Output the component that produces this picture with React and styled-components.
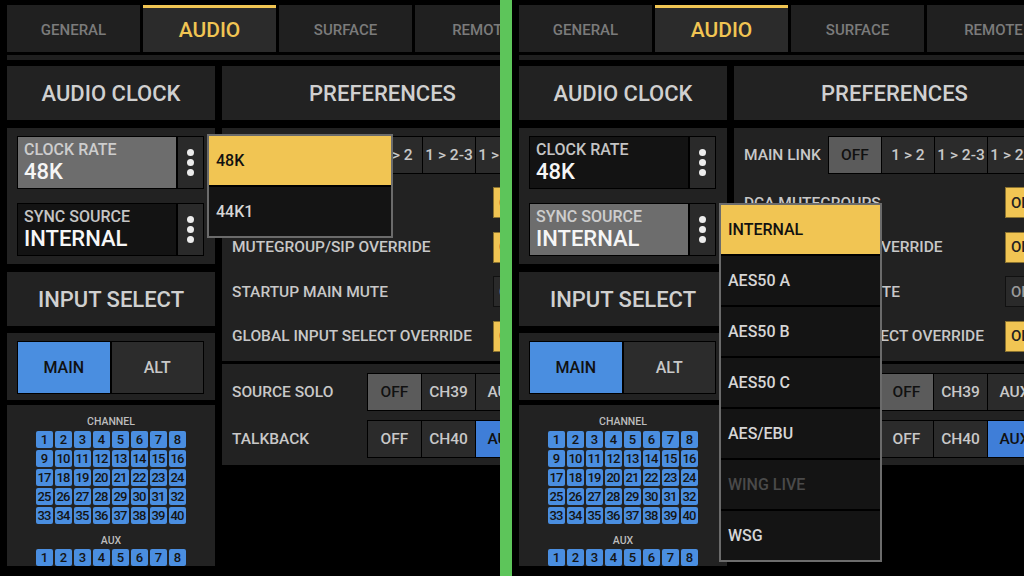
import React from 'react';
import styled, { createGlobalStyle } from 'styled-components';

const GlobalStyle = createGlobalStyle`
  body {
    margin: 0;
    background: #000;
  }
  * {
    box-sizing: border-box;
  }
`;

const YELLOW = '#f1c553';
const BLUE = '#4a8ee0';

const Page = styled.div`
  display: flex;
  width: 1024px;
  height: 576px;
  background: #000;
  overflow: hidden;
`;

const Pane = styled.div`
  width: ${p => p.$width}px;
  height: 576px;
  overflow: hidden;
  flex-shrink: 0;
`;

const Divider = styled.div`
  width: 12px;
  height: 576px;
  background: #5dc55a;
  flex-shrink: 0;
`;

const Screen = styled.div`
  position: relative;
  width: 560px;
  height: 576px;
  padding: 5px 0 0 7px;
  background: #000;
  font-family: Roboto, "Liberation Sans", sans-serif;
  font-weight: 500;
`;

const TabBar = styled.div`
  display: flex;
  gap: 3px;
`;

const Tab = styled.div`
  width: 133px;
  height: 47px;
  flex-shrink: 0;
  display: flex;
  align-items: center;
  justify-content: center;
  border-top: 3px solid ${p => (p.$active ? YELLOW : '#202020')};
  background: ${p => (p.$active ? '#2b2b2b' : '#202020')};
  color: ${p => (p.$active ? YELLOW : '#7b7b7b')};
  font-size: ${p => (p.$active ? '21px' : '15px')};
`;

const Strip = styled.div`
  height: 5px;
  margin-top: 3px;
  background: #1f1f1f;
`;

const Body = styled.div`
  display: grid;
  grid-template-columns: 208px 321px;
  column-gap: 7px;
  margin-top: 6px;
`;

const Column = styled.div`
  display: flex;
  flex-direction: column;
`;

const Header = styled.div`
  height: 54px;
  display: flex;
  align-items: center;
  justify-content: center;
  background: #222;
  color: #d0d0d0;
  font-size: 22px;
  margin-top: ${p => p.$gap || 0}px;
`;

const Panel = styled.div`
  background: #222;
  margin-top: ${p => p.$gap || 0}px;
  padding: ${p => p.$pad || '0'};
`;

const Field = styled.div`
  display: flex;
  gap: 2px;
  height: 53px;
  border: 1px solid #000;
  background: #000;
  margin-top: ${p => p.$gap || 0}px;
`;

const FieldBody = styled.div`
  flex: 1;
  display: flex;
  flex-direction: column;
  padding: 4px 6px 0;
  background: ${p => (p.$active ? '#6d6d6d' : '#131313')};
`;

const FieldLabel = styled.div`
  font-size: 16px;
  line-height: 18px;
  color: ${p => (p.$active ? '#cdcdcd' : '#c4c4c4')};
`;

const FieldValue = styled.div`
  font-size: 22px;
  line-height: 25px;
  color: #f6f6f6;
`;

const DotsButton = styled.div`
  width: 25px;
  display: flex;
  flex-direction: column;
  align-items: center;
  justify-content: center;
  gap: 3px;
  background: #2a2a2a;
`;

const Dot = styled.span`
  width: 7px;
  height: 7px;
  border-radius: 50%;
  background: #ececec;
`;

const Switch = styled.div`
  display: flex;
  gap: 2px;
  height: 53px;
  border: 1px solid #000;
  background: #000;
`;

const SwitchOption = styled.div`
  flex: 1;
  display: flex;
  align-items: center;
  justify-content: center;
  font-size: 16px;
  background: ${p => (p.$active ? BLUE : '#2c2c2c')};
  color: ${p => (p.$active ? '#111' : '#c8c8c8')};
`;

const ChannelPanel = styled.div`
  flex: 1;
  height: 200px;
  margin-top: 5px;
  padding-top: 11px;
  display: flex;
  flex-direction: column;
  align-items: center;
  background: #222;
`;

const GroupLabel = styled.div`
  font-size: 10.5px;
  line-height: 12px;
  color: #bdbdbd;
  margin-top: ${p => p.$gap || 0}px;
  margin-bottom: ${p => p.$below || 3}px;
`;

const ChipGrid = styled.div`
  display: grid;
  grid-template-columns: repeat(8, 17px);
  grid-auto-rows: 17px;
  column-gap: 2px;
  row-gap: 2px;
`;

const Chip = styled.div`
  display: flex;
  align-items: center;
  justify-content: center;
  border-radius: 2px;
  background: ${BLUE};
  color: #141414;
  font-size: 13px;
  letter-spacing: -0.9px;
  text-indent: -0.9px;
`;

const PrefRow = styled.div`
  display: flex;
  align-items: center;
  height: ${p => p.$h || 31}px;
  margin-top: ${p => p.$gap || 0}px;
`;

const RowLabel = styled.div`
  width: ${p => p.$w || 261}px;
  flex-shrink: 0;
  color: #c8c8c8;
  font-size: 15.5px;
  white-space: nowrap;
`;

const ButtonGroup = styled.div`
  display: flex;
  gap: 1px;
  height: 38px;
  padding: 1px;
  margin-left: -1px;
  background: #000;
`;

const GroupButton = styled.div`
  width: ${p => p.$w || 52}px;
  flex-shrink: 0;
  display: flex;
  align-items: center;
  justify-content: center;
  font-size: 15.5px;
  white-space: nowrap;
  background: ${p => (p.$tone === 'grey' ? '#5b5b5b' : p.$tone === 'blue' ? '#3f7ed8' : '#2b2b2b')};
  color: ${p => (p.$tone ? '#111' : '#c8c8c8')};
`;

const Toggle = styled.div`
  width: 42px;
  height: 31px;
  display: flex;
  align-items: center;
  padding-left: 5px;
  border: 1px solid ${p => (p.$on ? '#8a7230' : '#111')};
  background: ${p => (p.$on ? YELLOW : '#2a2a2a')};
  color: ${p => (p.$on ? '#222' : '#9a9a9a')};
  font-size: 15px;
`;

const Menu = styled.div`
  position: absolute;
  top: ${p => p.$top}px;
  left: ${p => p.$left}px;
  width: ${p => p.$width}px;
  display: flex;
  flex-direction: column;
  gap: 2px;
  border: 2px solid #6b6b6b;
  background: #000;
`;

const MenuItem = styled.div`
  height: 49px;
  display: flex;
  align-items: center;
  padding-left: 7px;
  font-size: 16px;
  background: ${p => (p.$selected ? YELLOW : '#141414')};
  color: ${p => (p.$selected ? '#111' : p.$disabled ? '#4a4a4a' : '#d6d6d6')};
`;

const tabs = ['GENERAL', 'AUDIO', 'SURFACE', 'REMOTE'];
const channels = Array.from({ length: 40 }, (_, i) => i + 1);
const auxes = Array.from({ length: 8 }, (_, i) => i + 1);

const menus = {
  clock: {
    top: 134,
    width: 186,
    items: [{ label: '48K', selected: true }, { label: '44K1' }],
  },
  sync: {
    top: 203,
    width: 163,
    items: [
      { label: 'INTERNAL', selected: true },
      { label: 'AES50 A' },
      { label: 'AES50 B' },
      { label: 'AES50 C' },
      { label: 'AES/EBU' },
      { label: 'WING LIVE', disabled: true },
      { label: 'WSG' },
    ],
  },
};

const toggles = [
  { label: 'DCA MUTEGROUPS', on: true },
  { label: 'MUTEGROUP/SIP OVERRIDE', on: true },
  { label: 'STARTUP MAIN MUTE', on: false },
  { label: 'GLOBAL INPUT SELECT OVERRIDE', on: true },
];

function ClockField({ label, value, active, gap }) {
  return (
    <Field $gap={gap}>
      <FieldBody $active={active}>
        <FieldLabel $active={active}>{label}</FieldLabel>
        <FieldValue>{value}</FieldValue>
      </FieldBody>
      <DotsButton>
        <Dot />
        <Dot />
        <Dot />
      </DotsButton>
    </Field>
  );
}

function AudioScreen({ open }) {
  const menu = menus[open];
  return (
    <Screen>
      <TabBar>
        {tabs.map(t => (
          <Tab key={t} $active={t === 'AUDIO'}>{t}</Tab>
        ))}
      </TabBar>
      <Strip />
      <Body>
        <Column>
          <Header>AUDIO CLOCK</Header>
          <Panel $gap={8} $pad="8px 11px 8px 10px">
            <ClockField label="CLOCK RATE" value="48K" active={open === 'clock'} />
            <ClockField label="SYNC SOURCE" value="INTERNAL" active={open === 'sync'} gap={14} />
          </Panel>
          <Header $gap={8}>INPUT SELECT</Header>
          <Panel $gap={7} $pad="8px 11px 6px 10px">
            <Switch>
              <SwitchOption $active>MAIN</SwitchOption>
              <SwitchOption>ALT</SwitchOption>
            </Switch>
          </Panel>
          <ChannelPanel>
            <GroupLabel>CHANNEL</GroupLabel>
            <ChipGrid>
              {channels.map(n => <Chip key={n}>{n}</Chip>)}
            </ChipGrid>
            <GroupLabel $gap={11} $below={2}>AUX</GroupLabel>
            <ChipGrid>
              {auxes.map(n => <Chip key={n}>{n}</Chip>)}
            </ChipGrid>
          </ChannelPanel>
        </Column>
        <Column>
          <Header>PREFERENCES</Header>
          <Panel $gap={8} $pad="8px 10px 9px 10px">
            <PrefRow $h={38}>
              <RowLabel $w={85}>MAIN LINK</RowLabel>
              <ButtonGroup>
                <GroupButton $tone="grey">OFF</GroupButton>
                <GroupButton>1 &gt; 2</GroupButton>
                <GroupButton>1 &gt; 2-3</GroupButton>
                <GroupButton>1 &gt; 2-4</GroupButton>
              </ButtonGroup>
            </PrefRow>
            {toggles.map((t, i) => (
              <PrefRow key={t.label} $gap={i === 0 ? 13 : 13.5}>
                <RowLabel>{t.label}</RowLabel>
                <Toggle $on={t.on}>{t.on ? 'ON' : 'OFF'}</Toggle>
              </PrefRow>
            ))}
          </Panel>
          <Panel $gap={3} $pad="9px 10px 7px 10px">
            <PrefRow $h={38}>
              <RowLabel $w={136}>SOURCE SOLO</RowLabel>
              <ButtonGroup>
                <GroupButton $tone="grey" $w={53}>OFF</GroupButton>
                <GroupButton $w={53}>CH39</GroupButton>
                <GroupButton $w={53}>AUX</GroupButton>
              </ButtonGroup>
            </PrefRow>
            <PrefRow $h={38} $gap={9}>
              <RowLabel $w={136}>TALKBACK</RowLabel>
              <ButtonGroup>
                <GroupButton $w={53}>OFF</GroupButton>
                <GroupButton $w={53}>CH40</GroupButton>
                <GroupButton $tone="blue" $w={53}>AUX</GroupButton>
              </ButtonGroup>
            </PrefRow>
          </Panel>
        </Column>
      </Body>
      <Menu $top={menu.top} $left={207} $width={menu.width}>
        {menu.items.map(it => (
          <MenuItem key={it.label} $selected={it.selected} $disabled={it.disabled}>
            {it.label}
          </MenuItem>
        ))}
      </Menu>
    </Screen>
  );
}

export default function App() {
  return (
    <Page>
      <GlobalStyle />
      <Pane $width={500}>
        <AudioScreen open="clock" />
      </Pane>
      <Divider />
      <Pane $width={512}>
        <AudioScreen open="sync" />
      </Pane>
    </Page>
  );
}
